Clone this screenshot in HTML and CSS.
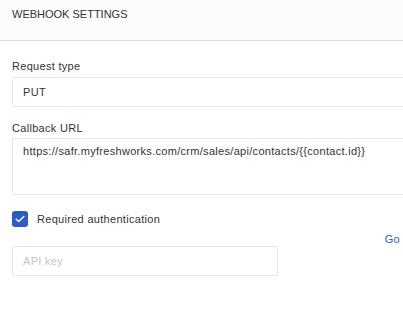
FILE: index.html
```html
<!DOCTYPE html>
<html lang="en">
<head>
  <meta charset="UTF-8">
  <title>Webhook settings</title>
  <link rel="stylesheet" href="styles.css">
</head>
<body>
  <div class="panel-header">WEBHOOK SETTINGS</div>

  <!-- FORMULARIO WEBHOOK -->
  <form class="webhook-form">
    <label class="field-label" for="request-type">Request type</label>
    <div class="field-box" id="request-type">PUT</div>

    <label class="field-label label-url" for="callback-url">Callback URL</label>
    <div class="field-box field-area" id="callback-url">https://safr.myfreshworks.com/crm/sales/api/contacts/{{contact.id}}</div>

    <div class="check-row">
      <span class="check-box">
        <svg width="10" height="8" viewBox="0 0 10 8"><path d="M1.2 4.2 L3.8 6.6 L8.8 1.4" fill="none" stroke="#fff" stroke-width="1.4" stroke-linecap="round" stroke-linejoin="round"/></svg>
      </span>
      <span class="check-label">Required authentication</span>
    </div>

    <div class="link-row"><a class="go-link">Go</a></div>
    <input type="text" class="api-input" placeholder="API key">
  </form>
</body>
</html>
```

FILE: styles.css
```css
body {
  margin: 0;
  font-family: "Liberation Sans", Arial, sans-serif;
  font-size: 11px;
  color: #333;
  background-color: white;
  overflow: hidden;
}

.panel-header {
  height: 40px;
  line-height: 28px;
  padding-left: 12px;
  background-color: #fcfcfc;
  border-bottom: 1px solid #d3dbe2;
  color: #333;
}

.webhook-form {
  padding: 18px 0 0 12px;
  letter-spacing: 0.3px;
}

.field-label {
  display: block;
  line-height: 14px;
  margin-bottom: 4px;
  color: #333;
}

.label-url {
  margin-top: 14px;
  margin-bottom: 3px;
}

.field-box {
  width: 420px;
  height: 28px;
  line-height: 28px;
  padding: 0 10px;
  border: 1px solid #e5e5e5;
  border-radius: 2px;
  box-sizing: content-box;
  color: #333;
  white-space: nowrap;
}

.field-area {
  height: 50px;
  line-height: 14px;
  padding-top: 5px;
  padding-bottom: 0;
}

.check-row {
  display: flex;
  align-items: center;
  margin-top: 16px;
  height: 16px;
}

.check-box {
  width: 16px;
  height: 16px;
  border-radius: 3px;
  background-color: #2c5cc5;
  display: flex;
  align-items: center;
  justify-content: center;
  margin-right: 9px;
}

.check-label {
  line-height: 14px;
}

.link-row {
  display: flex;
  justify-content: flex-end;
  margin-top: 5px;
  padding-right: 3px;
  line-height: 14px;
}

.go-link {
  color: #2c5cc5;
}

.api-input {
  display: block;
  width: 266px;
  height: 30px;
  box-sizing: border-box;
  padding: 0 10px;
  border: 1px solid #e5e5e5;
  border-radius: 2px;
  font-family: inherit;
  font-size: 11px;
  letter-spacing: 0.3px;
  outline: none;
}

.api-input::placeholder {
  color: #c4c4c4;
}
```
